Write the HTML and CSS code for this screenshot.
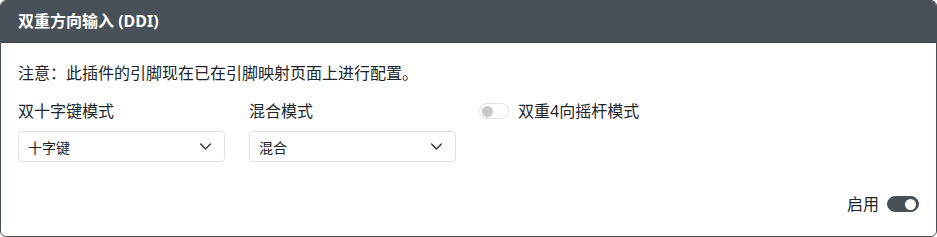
FILE: index.html
```html
<!DOCTYPE html>
<html lang="zh-CN">
<head>
    <meta charset="UTF-8">
    <title>双重方向输入 (DDI)</title>
    <link rel="stylesheet" href="styles.css">
</head>
<body>
    <div class="card">
        <div class="card-header">双重方向输入 (DDI)</div>
        <div class="card-body">
            <p class="note">注意：此插件的引脚现在已在引脚映射页面上进行配置。</p>
            <div class="row">
                <div class="field">
                    <label class="field-label">双十字键模式</label>
                    <div class="select">
                        <span>十字键</span>
                        <svg class="chevron" viewBox="0 0 16 16"><path d="M2 5l6 6 6-6" fill="none" stroke="#343a40" stroke-width="1.8" stroke-linecap="round" stroke-linejoin="round"/></svg>
                    </div>
                </div>
                <div class="field">
                    <label class="field-label">混合模式</label>
                    <div class="select">
                        <span>混合</span>
                        <svg class="chevron" viewBox="0 0 16 16"><path d="M2 5l6 6 6-6" fill="none" stroke="#343a40" stroke-width="1.8" stroke-linecap="round" stroke-linejoin="round"/></svg>
                    </div>
                </div>
                <div class="field">
                    <div class="switch-line">
                        <span class="switch"><span class="knob"></span></span>
                        <span>双重4向摇杆模式</span>
                    </div>
                </div>
            </div>
            <div class="footer">
                <span>启用</span>
                <span class="switch on"><span class="knob"></span></span>
            </div>
        </div>
    </div>
</body>
</html>
```

FILE: styles.css
```css
body {
    margin: 0;
    font-family: "Noto Sans", "Noto Sans CJK SC", sans-serif;
    font-size: 16px;
    color: #212529;
    background: #fff;
}

/* Card with dark header */
.card {
    width: 935px;
    height: 235px;
    border: 1px solid #495057;
    border-radius: 6px;
    overflow: hidden;
    display: flex;
    flex-direction: column;
}

.card-header {
    background: #495057;
    color: #fff;
    font-weight: bold;
    font-size: 16px;
    height: 41px;
    line-height: 41px;
    padding: 0 17px;
    border-bottom: 1px solid #3a3f45;
}

.card-body {
    flex: 1;
    padding: 18px 17px 16px;
    display: flex;
    flex-direction: column;
}

.note {
    margin: 0 0 14px;
    line-height: 24px;
}

.row {
    display: grid;
    grid-template-columns: repeat(4, 207px);
    column-gap: 24px;
}

.field-label {
    display: block;
    line-height: 24px;
    margin-bottom: 8px;
}

.select {
    height: 29px;
    border: 1px solid #dee2e6;
    border-radius: 4px;
    display: flex;
    align-items: center;
    justify-content: space-between;
    padding: 0 12px 0 9px;
    font-size: 14px;
}

.chevron {
    width: 13px;
    height: 13px;
}

.switch-line {
    display: flex;
    align-items: center;
    gap: 9px;
    line-height: 24px;
    margin-left: -1px;
}

/* Toggle switch */
.switch {
    width: 30px;
    height: 16px;
    border: 1px solid #dee2e6;
    border-radius: 8px;
    display: flex;
    align-items: center;
    padding: 0 2px;
    box-sizing: border-box;
}

.knob {
    width: 11px;
    height: 11px;
    border-radius: 50%;
    background: #c6c8ca;
}

.switch.on {
    background: #495057;
    border-color: #495057;
    justify-content: flex-end;
    width: 32px;
}

.switch.on .knob {
    background: #fff;
}

.footer {
    margin-top: auto;
    display: flex;
    justify-content: flex-end;
    align-items: center;
    gap: 8px;
    line-height: 24px;
    margin-bottom: 4px;
}
```
